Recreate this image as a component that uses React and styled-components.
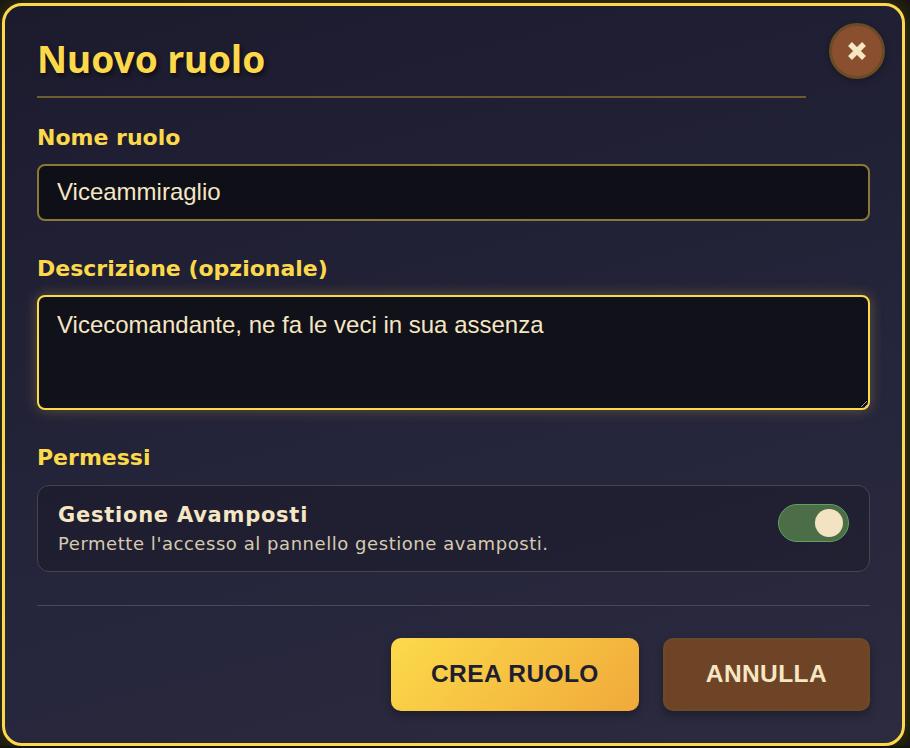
import React, { useEffect, useRef, useState } from 'react';
import styled, { createGlobalStyle } from 'styled-components';

const GlobalStyle = createGlobalStyle`
  html, body {
    margin: 0;
    padding: 0;
    background: #14130e;
    overflow: hidden;
  }
  * {
    box-sizing: border-box;
  }
`;

const Modal = styled.div`
  position: relative;
  margin: 3px 0 0 2px;
  width: 903px;
  height: 743px;
  border: 3px solid #fcd94a;
  border-radius: 20px;
  background: linear-gradient(165deg, #1c1b2e 0%, #24243a 55%, #2c2b40 100%);
  box-shadow: 0 0 24px rgba(252, 217, 74, 0.22);
  padding: 32px;
  display: flex;
  flex-direction: column;
`;

const Header = styled.div`
  margin-right: 64px;
  padding-bottom: 15px;
  border-bottom: 2px solid #6b5d2f;
  margin-bottom: 27px;
`;

const Title = styled.h2`
  margin: 0;
  font-family: "Noto Sans", sans-serif;
  font-weight: 700;
  font-size: 37px;
  line-height: 1.15;
  color: #fcd94a;
  text-shadow: 2px 3px 4px rgba(0, 0, 0, 0.55);
`;

const CloseButton = styled.button`
  position: absolute;
  top: 17px;
  right: 17px;
  width: 56px;
  height: 56px;
  border-radius: 50%;
  border: 3px solid #6b4a26;
  background: #8a4f2e;
  display: flex;
  align-items: center;
  justify-content: center;
  padding: 0;
  cursor: pointer;
  box-shadow: 0 2px 6px rgba(0, 0, 0, 0.3);
`;

const Field = styled.div`
  display: flex;
  flex-direction: column;
  gap: 13px;
  margin-bottom: ${p => p.$gap ?? 35}px;
`;

const Label = styled.label`
  font-family: "DejaVu Sans", Verdana, sans-serif;
  font-weight: 700;
  font-size: 22px;
  line-height: 1.2;
  color: #fcd94a;
`;

const TextInput = styled.input`
  height: 57px;
  width: 100%;
  padding: 0 18px;
  border: 2px solid #8a7936;
  border-radius: 8px;
  background: #0f0f17;
  color: #f5e6c4;
  font-family: "Liberation Sans", Arial, sans-serif;
  font-size: 24px;
  outline: none;
`;

const TextArea = styled.textarea`
  height: 115px;
  width: 100%;
  padding: 14px 18px;
  border: 2px solid #fcd94a;
  border-radius: 8px;
  background: #111119;
  color: #f5e6c4;
  caret-color: #f5e6c4;
  font-family: "Liberation Sans", Arial, sans-serif;
  font-size: 24px;
  line-height: normal;
  outline: none;
  resize: vertical;
  box-shadow: 0 0 14px rgba(252, 217, 74, 0.28);
`;

const PermissionCard = styled.div`
  display: flex;
  align-items: flex-start;
  justify-content: space-between;
  padding: 17px 20px 16px;
  border: 1px solid #46444f;
  border-radius: 12px;
  background: rgba(20, 20, 32, 0.35);
`;

const PermissionInfo = styled.div`
  display: flex;
  flex-direction: column;
  gap: 5px;
`;

const PermissionName = styled.div`
  font-family: "DejaVu Sans", Verdana, sans-serif;
  font-weight: 700;
  font-size: 21px;
  line-height: 1.2;
  letter-spacing: 0.75px;
  color: #f5e6c4;
`;

const PermissionDesc = styled.div`
  font-family: "DejaVu Sans", Verdana, sans-serif;
  font-size: 18px;
  line-height: 1.2;
  letter-spacing: 0.55px;
  color: #d6cab0;
`;

const Toggle = styled.button`
  margin-top: 1px;
  width: 71px;
  height: 38px;
  border-radius: 19px;
  border: 1px solid ${p => (p.$on ? '#5fa35a' : '#555')};
  background: ${p => (p.$on ? '#4b6d47' : '#3a3a48')};
  display: flex;
  align-items: center;
  justify-content: ${p => (p.$on ? 'flex-end' : 'flex-start')};
  padding: 0 5px;
  cursor: pointer;
`;

const Knob = styled.span`
  width: 28px;
  height: 28px;
  border-radius: 50%;
  background: #f2e4c3;
`;

const Footer = styled.div`
  margin-top: 33px;
  padding-top: 32px;
  border-top: 1px solid #4a4858;
  display: flex;
  justify-content: flex-end;
  gap: 24px;
`;

const Button = styled.button`
  height: 73px;
  padding: 0 ${p => (p.$primary ? 40 : 41)}px;
  border-radius: 10px;
  font-family: "Liberation Sans", Arial, sans-serif;
  font-weight: 700;
  font-size: 24.5px;
  letter-spacing: 0.4px;
  cursor: pointer;
  border: ${p => (p.$primary ? 'none' : '2px solid #6a4a2b')};
  color: ${p => (p.$primary ? '#1e1e30' : '#f5e6c4')};
  background: ${p =>
    p.$primary ? 'linear-gradient(135deg, #fcda4a 0%, #f0a93a 100%)' : '#6f4426'};
  box-shadow: 0 4px 10px rgba(0, 0, 0, 0.3);
`;

export default function App() {
  const [enabled, setEnabled] = useState(true);
  const areaRef = useRef(null);

  useEffect(() => {
    const el = areaRef.current;
    if (el) {
      el.focus();
      el.setSelectionRange(el.value.length, el.value.length);
    }
  }, []);

  return (
    <>
      <GlobalStyle />
      <Modal>
        <Header>
          <Title>Nuovo ruolo</Title>
        </Header>
        <CloseButton aria-label="Chiudi">
          <svg width="22" height="22" viewBox="0 0 22 22">
            <path d="M4 4 L18 18 M18 4 L4 18" stroke="#f5e6c4" strokeWidth="5.5" strokeLinecap="butt" />
          </svg>
        </CloseButton>

        <Field>
          <Label>Nome ruolo</Label>
          <TextInput defaultValue="Viceammiraglio" />
        </Field>

        <Field>
          <Label>Descrizione (opzionale)</Label>
          <TextArea ref={areaRef} defaultValue="Vicecomandante, ne fa le veci in sua assenza" />
        </Field>

        <Field $gap={0}>
          <Label>Permessi</Label>
          <PermissionCard>
            <PermissionInfo>
              <PermissionName>Gestione Avamposti</PermissionName>
              <PermissionDesc>Permette l'accesso al pannello gestione avamposti.</PermissionDesc>
            </PermissionInfo>
            <Toggle $on={enabled} onClick={() => setEnabled(!enabled)}>
              <Knob />
            </Toggle>
          </PermissionCard>
        </Field>

        <Footer>
          <Button $primary>CREA RUOLO</Button>
          <Button>ANNULLA</Button>
        </Footer>
      </Modal>
    </>
  );
}
